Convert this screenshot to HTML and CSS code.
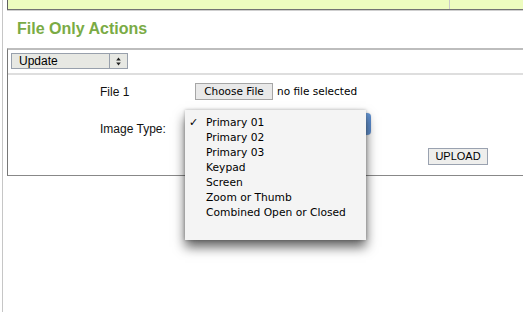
FILE: index.html
```html
<!DOCTYPE html>
<html>
<head>
<meta charset="utf-8">
<link rel="stylesheet" href="styles.css">
</head>
<body>
<div class="page">
  <div class="topbar"><div class="topbar-cell"></div><div class="topbar-cell last"></div></div>
  <h2 class="title">File Only Actions</h2>
  <div class="panel">
    <div class="panel-head">
      <div class="mini-select">
        <span class="mini-select-text">Update</span>
        <span class="mini-select-arrows">
          <svg width="5" height="9" viewBox="0 0 5 9"><path d="M2.5 0.5 L4.8 3.5 L0.2 3.5 Z M2.5 8.5 L4.8 5.5 L0.2 5.5 Z" fill="#222"/></svg>
        </span>
      </div>
    </div>
    <div class="panel-body">
      <div class="row row-file">
        <span class="label">File 1</span>
        <span class="choose-btn">Choose File</span>
        <span class="no-file">no file selected</span>
      </div>
      <div class="row row-type">
        <span class="label label-type">Image Type:</span>
        <div class="type-field">
          <div class="aqua-select"></div>
          <ul class="menu">
            <li class="menu-item checked"><span class="check">✓</span>Primary 01</li>
            <li class="menu-item">Primary 02</li>
            <li class="menu-item">Primary 03</li>
            <li class="menu-item">Keypad</li>
            <li class="menu-item">Screen</li>
            <li class="menu-item">Zoom or Thumb</li>
            <li class="menu-item">Combined Open or Closed</li>
          </ul>
        </div>
      </div>
      <div class="row row-upload">
        <button class="upload-btn">UPLOAD</button>
      </div>
    </div>
  </div>
</div>
</body>
</html>
```

FILE: styles.css
```css
html, body {
  margin: 0;
  padding: 0;
  background: #fff;
}

body {
  width: 523px;
  height: 312px;
  overflow: hidden;
  font-family: "Liberation Sans", Arial, sans-serif;
  color: #000;
}

.page {
  margin-left: 2px;
  border-left: 1px solid #c6c6c6;
  padding-left: 4px;
  min-height: 312px;
  box-sizing: border-box;
}

.topbar {
  display: flex;
  height: 9px;
  background: #edfcbf;
  border-left: 1px solid #606060;
  border-bottom: 1px solid #737373;
  box-shadow: 0 1px 0 #cfcfcf;
}

.topbar-cell {
  width: 441px;
  border-right: 1px solid #c9c9c9;
}

.topbar-cell.last {
  flex: 1;
  border-right: none;
}

.title {
  margin: 10px 0 10px 10px;
  font-size: 16px;
  line-height: 18px;
  font-weight: bold;
  color: #7aab45;
}

.panel {
  border-top: 2px solid #bdbdbd;
  border-left: 1px solid #777;
  border-bottom: 1px solid #888;
}

.panel-head {
  padding: 3px 3px 4px;
  border-bottom: 2px solid #dedede;
}

.mini-select {
  display: flex;
  align-items: center;
  width: 117px;
  height: 16px;
  box-sizing: border-box;
  border: 1px solid #98a0ac;
  background: #e7e8e3;
}

.mini-select-text {
  flex: 1;
  padding-left: 7px;
  font-size: 12px;
  line-height: 14px;
  border-right: 1px solid #98a0ac;
  height: 14px;
}

.mini-select-arrows {
  width: 17px;
  display: flex;
  justify-content: center;
  align-items: center;
}

.mini-select-arrows svg {
  display: block;
}

.panel-body {
  padding: 8px 0 10px 92px;
}

.row {
  display: flex;
}

.label {
  width: 95px;
  font-size: 12px;
  line-height: 14px;
  color: #111;
}

.row-file {
  align-items: center;
  height: 17px;
}

.choose-btn {
  box-sizing: border-box;
  height: 17px;
  width: 78px;
  border: 1px solid #a6a6a6;
  background: #e9e9e9;
  font-family: "DejaVu Sans", sans-serif;
  font-size: 10.5px;
  line-height: 15px;
  text-align: center;
}

.no-file {
  margin-left: 4px;
  font-family: "DejaVu Sans", sans-serif;
  font-size: 10.5px;
  line-height: 15px;
}

.row-type {
  margin-top: 13px;
  height: 22px;
}

.label-type {
  margin-top: 9px;
}

.type-field {
  position: relative;
  width: 176px;
  height: 22px;
}

.aqua-select {
  height: 22px;
  border-radius: 4px;
  background: linear-gradient(to right, #fafafa 0, #fafafa 160px, #7aa6dc 168px, #5a8cd0 176px);
  box-shadow: 0 0 1px rgba(0, 0, 0, 0.3);
}

.menu {
  position: absolute;
  left: -10px;
  top: -3px;
  width: 181px;
  height: 130px;
  box-sizing: border-box;
  margin: 0;
  padding: 5px 0 0;
  list-style: none;
  background: #f4f4f4;
  box-shadow: 0 7px 11px rgba(0, 0, 0, 0.62), 0 0 3px rgba(0, 0, 0, 0.25);
  z-index: 5;
}

.menu-item {
  position: relative;
  padding-left: 21px;
  font-family: "DejaVu Sans", sans-serif;
  font-size: 10.7px;
  line-height: 15px;
  color: #000;
  white-space: nowrap;
}

.check {
  position: absolute;
  left: 4px;
  top: 0;
  font-size: 11px;
  font-weight: bold;
}

.row-upload {
  margin-top: 13px;
  padding-left: 328px;
}

.upload-btn {
  box-sizing: border-box;
  width: 60px;
  height: 17px;
  margin: 0;
  padding: 0;
  border: 1px solid #9aa2b0;
  background: #eeeeec;
  font-family: "Liberation Sans", Arial, sans-serif;
  font-size: 11px;
  line-height: 15px;
  color: #000;
}
```
